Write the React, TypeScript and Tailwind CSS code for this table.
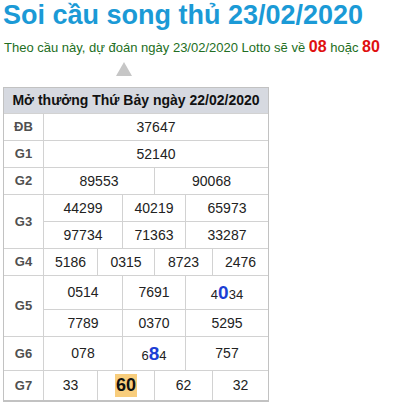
import React from "react";

type Cell = { span: string; value: React.ReactNode };

const Num = ({ children, span }: { children: React.ReactNode; span: string }) => (
    <div className={`${span} flex items-center justify-center bg-white text-[14px] text-[#222]`}>
        {children}
    </div>
);

const Label = ({ children, rows }: { children: React.ReactNode; rows?: string }) => (
    <div
        className={`${rows ?? ""} flex items-center justify-center bg-white text-[13px] font-bold text-[#505050]`}
    >
        {children}
    </div>
);

// a number with one digit picked out by the prediction
const Marked = ({ before, hit, after }: { before: string; hit: string; after: string }) => (
    <span className="flex items-baseline leading-none">
        <span className="text-[13px] text-[#222]">{before}</span>
        <span className="text-[19px] font-bold text-[#1d3fd4]">{hit}</span>
        <span className="text-[13px] text-[#222]">{after}</span>
    </span>
);

export default function App() {
    const g3: Cell[] = [
        { span: "col-span-2", value: "44299" },
        { span: "col-span-2", value: "40219" },
        { span: "col-span-2", value: "65973" },
        { span: "col-span-2", value: "97734" },
        { span: "col-span-2", value: "71363" },
        { span: "col-span-2", value: "33287" },
    ];

    return (
        <div className="min-h-[405px] bg-white pl-[3px] font-['Liberation_Sans',Arial,sans-serif]">
            {/* Title */}
            <h1 className="text-[27px] leading-[30px] font-bold text-[#1b9ad6]">
                Soi cầu song thủ 23/02/2020
            </h1>
            <p className="mt-[7px] pl-[1px] text-[13px] leading-[20px] text-[#236e23]">
                Theo cầu này, dự đoán ngày 23/02/2020 Lotto sẽ về{" "}
                <b className="text-[16px] text-[#e01010]">08</b> hoặc{" "}
                <b className="text-[16px] text-[#e01010]">80</b>
            </p>

            {/* Pointer */}
            <div className="mt-[4px] ml-[113px] h-0 w-0 border-l-[8px] border-r-[8px] border-b-[14px] border-l-transparent border-r-transparent border-b-[#c6c6c6]" />

            {/* Results table */}
            <div className="mt-[11px] w-[266px] border border-b-2 border-[#c2c2c2] bg-[#d2d2d2]">
                <div className="grid grid-cols-[39px_53px_24px_31px_30px_26px_55px] grid-rows-[25px_26px_26px_26px_26px_26px_26px_33px_26px_33px_29px] gap-px">
                    <div className="col-span-7 flex items-center justify-center bg-[#d6d9e0] text-[14px] font-bold text-[#111]">
                        Mở thưởng Thứ Bảy ngày 22/02/2020
                    </div>

                    <Label>ĐB</Label>
                    <Num span="col-span-6">37647</Num>

                    <Label>G1</Label>
                    <Num span="col-span-6">52140</Num>

                    <Label>G2</Label>
                    <Num span="col-span-3">89553</Num>
                    <Num span="col-span-3">90068</Num>

                    <Label rows="row-span-2">G3</Label>
                    {g3.map((c, i) => (
                        <Num key={i} span={c.span}>
                            {c.value}
                        </Num>
                    ))}

                    <Label>G4</Label>
                    <Num span="col-span-1">5186</Num>
                    <Num span="col-span-2">0315</Num>
                    <Num span="col-span-2">8723</Num>
                    <Num span="col-span-1">2476</Num>

                    <Label rows="row-span-2">G5</Label>
                    <Num span="col-span-2">0514</Num>
                    <Num span="col-span-2">7691</Num>
                    <Num span="col-span-2">
                        <Marked before="4" hit="0" after="34" />
                    </Num>
                    <Num span="col-span-2">7789</Num>
                    <Num span="col-span-2">0370</Num>
                    <Num span="col-span-2">5295</Num>

                    <Label>G6</Label>
                    <Num span="col-span-2">078</Num>
                    <Num span="col-span-2">
                        <Marked before="6" hit="8" after="4" />
                    </Num>
                    <Num span="col-span-2">757</Num>

                    <Label>G7</Label>
                    <Num span="col-span-1">33</Num>
                    <Num span="col-span-2">
                        <span className="bg-[#f8cd7c] px-px text-[18px] leading-[23px] font-bold text-[#111]">
                            60
                        </span>
                    </Num>
                    <Num span="col-span-2">62</Num>
                    <Num span="col-span-1">32</Num>
                </div>
            </div>
        </div>
    );
}
